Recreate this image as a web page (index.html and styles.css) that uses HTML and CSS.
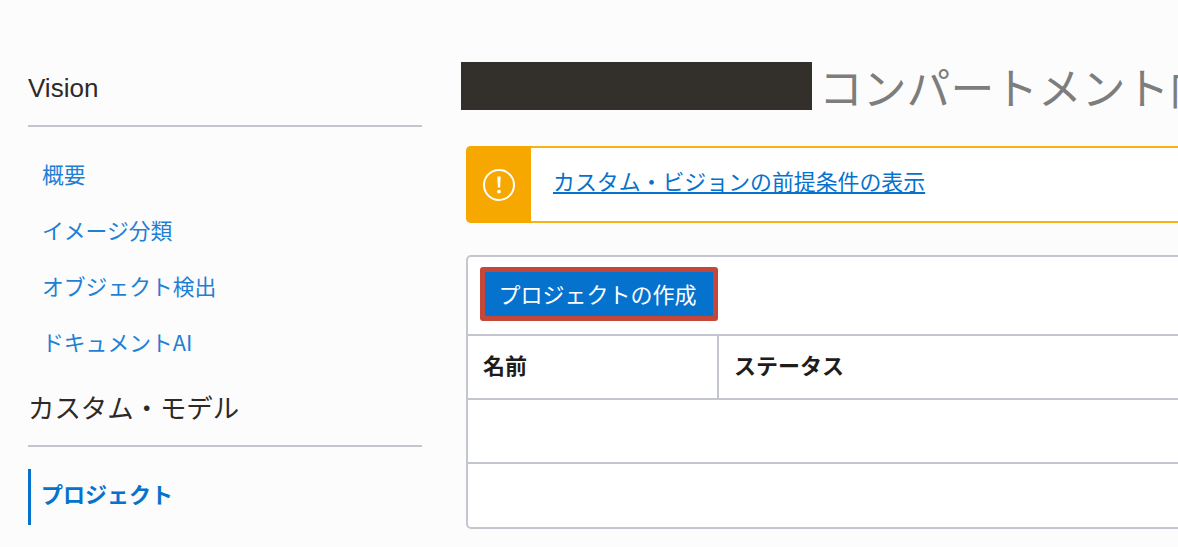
FILE: index.html
```html
<!DOCTYPE html>
<html lang="ja">
<head>
<meta charset="utf-8">
<title>Vision</title>
<link rel="stylesheet" href="styles.css">
</head>
<body>
<div class="page">
  <aside class="sidebar">
    <h2 class="side-title">Vision</h2>
    <ul class="nav">
      <li class="nav-item"><a href="#">概要</a></li>
      <li class="nav-item"><a href="#">イメージ分類</a></li>
      <li class="nav-item"><a href="#">オブジェクト検出</a></li>
      <li class="nav-item"><a href="#">ドキュメントAI</a></li>
    </ul>
    <h2 class="side-title side-title-custom">カスタム・モデル</h2>
    <a class="nav-active" href="#">プロジェクト</a>
  </aside>
  <main class="content">
    <h1 class="heading"><span class="redacted"></span><span class="heading-text">コンパートメント内</span></h1>
    <div class="alert">
      <div class="alert-icon">
        <svg width="34" height="34" viewBox="0 0 34 34" aria-hidden="true">
          <circle cx="17" cy="17" r="15" fill="none" stroke="#fff" stroke-width="2"/>
          <path d="M15.3 8.5h3.4l-.6 11h-2.2z" fill="#fff"/>
          <circle cx="17" cy="23.6" r="1.9" fill="#fff"/>
        </svg>
      </div>
      <a class="alert-link" href="#">カスタム・ビジョンの前提条件の表示</a>
    </div>
    <div class="panel">
      <div class="toolbar"><button class="create-btn" type="button">プロジェクトの作成</button></div>
      <div class="row row-head">
        <div class="cell cell-name">名前</div>
        <div class="cell">ステータス</div>
      </div>
      <div class="row"></div>
      <div class="row row-last"></div>
    </div>
  </main>
</div>
</body>
</html>
```

FILE: styles.css
```css
* { box-sizing: border-box; }
html, body { margin: 0; height: 100%; overflow: hidden; }
body {
  background: #fcfcfc;
  font-family: "Noto Sans CJK JP", "Liberation Sans", sans-serif;
  color: #2c2a28;
}
.page {
  display: grid;
  grid-template-columns: 394px 1fr;
  column-gap: 44px;
  width: 1178px;
  height: 547px;
  padding: 62px 0 0 28px;
  overflow: hidden;
}
.sidebar { display: flex; flex-direction: column; }
.side-title {
  margin: 0;
  height: 65px;
  padding-top: 9px;
  border-bottom: 2px solid #c3c7cd;
  font-family: "Liberation Sans", "Noto Sans CJK JP", sans-serif;
  font-size: 26px;
  line-height: 34px;
  font-weight: 400;
}
.side-title-custom {
  height: 65px;
  padding-top: 0;
  margin-top: 12px;
  font-family: "Noto Sans CJK JP", sans-serif;
  font-size: 26.4px;
  line-height: 50px;
}
.nav { list-style: none; margin: 0; padding: 19px 0 0 14px; }
.nav-item { height: 56px; line-height: 56px; font-size: 21.8px; }
.nav-item a { color: #1f7fd4; text-decoration: none; display: block; }
.nav-active {
  display: block;
  margin-top: 22px;
  height: 56px;
  border-left: 3px solid #0572ce;
  padding-left: 10px;
  color: #0572ce;
  font-size: 22px;
  font-weight: 700;
  line-height: 48px;
  text-decoration: none;
}
.content { min-width: 0; margin-left: -5px; margin-right: -600px; }
.heading {
  display: flex;
  align-items: center;
  gap: 7px;
  margin: 0;
  height: 48px;
  font-weight: 400;
  white-space: nowrap;
}
.redacted { display: block; width: 351px; height: 48px; background: #332f2b; flex: none; }
.heading-text { font-size: 43.8px; line-height: 48px; color: #7d7d7d; }
.alert {
  display: flex;
  align-items: center;
  height: 77px;
  margin: 36px 0 32px 5px;
  border: 2px solid #f8b117;
  border-left: 0;
  border-radius: 5px;
  background: #fff;
}
.alert-icon {
  display: flex;
  align-items: center;
  justify-content: center;
  flex: none;
  align-self: stretch;
  width: 65px;
  margin: -2px 0;
  background: #f7a800;
  border-radius: 5px 0 0 5px;
}
.alert-link {
  margin-left: 22px;
  margin-bottom: 8px;
  color: #0572ce;
  font-size: 21.9px;
  line-height: 30px;
  text-decoration: underline;
}
.panel {
  margin-left: 5px;
  border: 2px solid #c3c7cd;
  border-radius: 5px;
  background: #fff;
}
.toolbar {
  display: flex;
  align-items: flex-start;
  height: 79px;
  padding: 10px 0 0 12px;
  border-bottom: 2px solid #c3c7cd;
}
.create-btn {
  width: 238px;
  height: 54px;
  padding: 0 3px 2px 0;
  border: 5px solid #c4473a;
  border-radius: 3px;
  background: #0572ce;
  color: #fff;
  font-family: inherit;
  font-size: 22px;
  line-height: 42px;
}
.row { display: flex; height: 64px; border-bottom: 2px solid #c3c7cd; }
.row-last { height: 63px; border-bottom: 0; }
.cell {
  display: flex;
  align-items: center;
  padding: 0 15px 7px;
  font-size: 22px;
  font-weight: 700;
  color: #1f1d1b;
}
.cell-name { width: 251px; border-right: 2px solid #c3c7cd; }
```
